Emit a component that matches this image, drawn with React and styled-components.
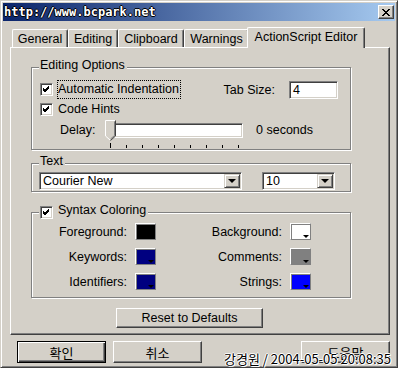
import styled, { createGlobalStyle } from "styled-components";

const GlobalStyle = createGlobalStyle`
  body {
    margin: 0;
    background: #ffffff;
  }
  * {
    box-sizing: border-box;
  }
`;

const Window = styled.div`
  position: relative;
  width: 398px;
  height: 368px;
  display: flex;
  flex-direction: column;
  padding: 2px;
  background: #d4d0c8;
  border: 1px solid;
  border-color: #d4d0c8 #404040 #404040 #d4d0c8;
  box-shadow: inset 1px 1px 0 #fff, inset -1px -1px 0 #808080;
  font-family: "Liberation Sans", "Noto Sans CJK KR", sans-serif;
  font-size: 12.5px;
  color: #000;
`;

const TitleBar = styled.div`
  height: 18px;
  display: flex;
  align-items: center;
  justify-content: space-between;
  padding: 0 1px 0 1px;
  background: linear-gradient(to right, #0a246a, #a6caf0);
`;

const TitleText = styled.span`
  font-family: "DejaVu Sans Mono", monospace;
  font-weight: bold;
  font-size: 12px;
  color: #fff;
  text-shadow: 1px 0 0 #000, -1px 0 0 #000, 0 1px 0 #000, 0 -1px 0 #000;
`;

const CloseButton = styled.div`
  width: 16px;
  height: 14px;
  display: flex;
  align-items: center;
  justify-content: center;
  background: #d4d0c8;
  border: 1px solid;
  border-color: #fff #404040 #404040 #fff;
  box-shadow: inset -1px -1px 0 #808080;
`;

const TabStrip = styled.div`
  position: relative;
  z-index: 1;
  height: 20px;
  margin-top: 6px;
  padding-left: 9px;
  display: flex;
  align-items: flex-end;
`;

const Tab = styled.div`
  width: ${({ $w }) => $w}px;
  height: ${({ $active }) => ($active ? 21 : 18)}px;
  margin: ${({ $active }) => ($active ? "0 -2px -1px -2px" : "0")};
  padding-top: 2px;
  line-height: 14px;
  text-align: center;
  white-space: nowrap;
  background: #d4d0c8;
  border-top: 1px solid #fff;
  border-left: 1px solid #fff;
  border-right: 1px solid #404040;
  border-radius: 2px 2px 0 0;
  box-shadow: inset -1px 0 0 #808080;
  position: relative;
  z-index: ${({ $active }) => ($active ? 2 : 0)};
`;

const Panel = styled.div`
  width: 380px;
  height: 288px;
  margin-left: 7px;
  padding: 19px 0 0 20px;
  display: flex;
  flex-direction: column;
  align-items: flex-start;
  border: 1px solid;
  border-color: #fff #404040 #404040 #fff;
  box-shadow: inset -1px -1px 0 #808080;
`;

const Group = styled.div`
  position: relative;
  width: 320px;
  height: ${({ $h }) => $h}px;
  margin-top: ${({ $mt }) => $mt || 0}px;
  border: 1px solid #808080;
  box-shadow: inset 1px 1px 0 #fff, 1px 1px 0 #fff;
  padding: ${({ $pad }) => $pad};
`;

const Legend = styled.div`
  position: absolute;
  top: ${({ $top }) => $top}px;
  left: 7px;
  padding: 0 2px 0 1px;
  line-height: 14px;
  background: #d4d0c8;
  display: flex;
  align-items: center;
  gap: 5px;
`;

const LegendText = styled.span`
  position: relative;
  top: ${({ $shift }) => $shift || 0}px;
`;

const Row = styled.div`
  display: flex;
  align-items: center;
  height: ${({ $h }) => $h}px;
  margin-top: ${({ $mt }) => $mt || 0}px;
  justify-content: ${({ $between }) => ($between ? "space-between" : "flex-start")};
`;

const CheckLabel = styled.div`
  display: flex;
  align-items: center;
  gap: 4px;
`;

const Box = styled.div`
  width: 13px;
  height: 13px;
  display: flex;
  align-items: center;
  justify-content: center;
  background: #fff;
  border: 1px solid;
  border-color: #808080 #fff #fff #808080;
  box-shadow: inset 1px 1px 0 #404040, inset -1px -1px 0 #d4d0c8;
`;

const FocusText = styled.span`
  line-height: 17px;
  padding: 0 1px 0 0;
  border: 1px dotted ${({ $focused }) => ($focused ? "#000" : "transparent")};
`;

const Sunken = styled.div`
  border: 1px solid;
  border-color: #808080 #fff #fff #808080;
  box-shadow: inset 1px 1px 0 #404040, inset -1px -1px 0 #d4d0c8;
  background: #fff;
`;

const TabSize = styled.div`
  display: flex;
  align-items: center;
  gap: 14px;
`;

const TextInput = styled(Sunken)`
  width: 49px;
  height: 18px;
  padding: 0 0 0 3px;
  line-height: 16px;
`;

const DelayLabel = styled.span`
  width: 45px;
  margin-left: 20px;
`;

const Slider = styled.div`
  position: relative;
  width: 138px;
  height: 20px;
  display: flex;
  align-items: center;
`;

const Channel = styled(Sunken)`
  width: 131px;
  height: 15px;
  margin-left: 8px;
`;

const Thumb = styled.svg`
  position: absolute;
  left: 0;
  top: 0;
`;

const Seconds = styled.span`
  margin-left: 13px;
`;

const Ticks = styled.div`
  display: flex;
  align-items: flex-end;
  gap: 15px;
  height: 5px;
  margin-top: 3px;
  padding-left: 70px;
`;

const Tick = styled.div`
  width: 1px;
  height: ${({ $tall }) => ($tall ? 5 : 3)}px;
  background: #000;
`;

const Combo = styled(Sunken)`
  width: ${({ $w }) => $w}px;
  height: 18px;
  margin-left: ${({ $ml }) => $ml || 0}px;
  display: flex;
  align-items: center;
  padding: 1px 1px 1px 3px;
`;

const ComboText = styled.span`
  flex: 1;
  line-height: 14px;
`;

const DropButton = styled.div`
  width: 16px;
  height: 14px;
  display: flex;
  align-items: center;
  justify-content: center;
  background: #d4d0c8;
  border: 1px solid;
  border-color: #d4d0c8 #404040 #404040 #d4d0c8;
  box-shadow: inset 1px 1px 0 #fff, inset -1px -1px 0 #808080;
`;

const Arrow = styled.div`
  width: 0;
  height: 0;
  border-left: 4px solid transparent;
  border-right: 4px solid transparent;
  border-top: 4px solid #000;
`;

const ColorGrid = styled.div`
  display: grid;
  grid-template-columns: 116px 155px;
  row-gap: 8px;
`;

const ColorRow = styled.div`
  height: 17px;
  display: flex;
  align-items: center;
  justify-content: flex-end;
  gap: 8px;
`;

const Swatch = styled.div`
  position: relative;
  width: 21px;
  height: 17px;
  border: 1px solid;
  border-color: #fff #808080 #808080 #fff;
  box-shadow: inset 1px 1px 0 #808080;
  background: ${({ $color }) => $color};
`;

const SwatchArrow = styled.div`
  position: absolute;
  right: 0;
  bottom: 0;
  width: 8px;
  height: 5px;
  display: flex;
  justify-content: center;
  padding-top: 1px;
  background: ${({ $color }) => $color};
  &::after {
    content: "";
    border-left: 3px solid transparent;
    border-right: 3px solid transparent;
    border-top: 3px solid #000;
  }
`;

const Button = styled.div`
  width: ${({ $w }) => $w}px;
  height: ${({ $h }) => $h}px;
  display: flex;
  align-items: center;
  justify-content: center;
  background: #d4d0c8;
  border: 1px solid;
  border-color: ${({ $default }) =>
    $default ? "#000" : "#fff #404040 #404040 #fff"};
  box-shadow: ${({ $default }) =>
    $default
      ? "inset 1px 1px 0 #fff, inset -1px -1px 0 #404040, inset -2px -2px 0 #808080"
      : "inset -1px -1px 0 #808080"};
`;

const ResetButton = styled(Button)`
  margin: 10px 0 0 85px;
`;

const ButtonRow = styled.div`
  display: flex;
  align-items: center;
  gap: 7px;
  margin-top: 6px;
  padding: 0 5px 0 14px;
  font-size: 13px;
  & > :last-child {
    margin-left: auto;
  }
`;

const Stamp = styled.div`
  position: absolute;
  left: 223px;
  top: 350px;
  font-family: "Noto Sans CJK KR", sans-serif;
  font-size: 13px;
  line-height: 16px;
  color: #000;
  text-shadow: 1px 1px 0 #fff, -1px 0 0 #fff, 0 -1px 0 #fff, 1px 0 0 #fff;
  white-space: nowrap;
`;

const Check = () => (
  <svg width="7" height="7" viewBox="0 0 7 7">
    <path d="M0 2 L2 4 L6 0 M0 3 L2 5 L6 1 M0 4 L2 6 L6 2" stroke="#000" strokeWidth="1" fill="none" shapeRendering="crispEdges" />
  </svg>
);

const colors = [
  ["Foreground:", "#000000", "Background:", "#ffffff"],
  ["Keywords:", "#000080", "Comments:", "#808080"],
  ["Identifiers:", "#000080", "Strings:", "#0000ff"],
];

const tabs = [
  ["General", 56],
  ["Editing", 50],
  ["Clipboard", 66],
  ["Warnings", 65],
];

const App = () => {
  return (
    <>
      <GlobalStyle />
      <Window>
        <TitleBar>
          <TitleText>http://www.bcpark.net</TitleText>
          <CloseButton>
            <svg width="8" height="7" viewBox="0 0 8 7">
              <path d="M0 0 L7 7 M1 0 L8 7 M7 0 L0 7 M8 0 L1 7" stroke="#000" strokeWidth="1" />
            </svg>
          </CloseButton>
        </TitleBar>

        <TabStrip>
          {tabs.map(([name, w]) => (
            <Tab key={name} $w={w}>
              {name}
            </Tab>
          ))}
          <Tab $w={118} $active>
            ActionScript Editor
          </Tab>
        </TabStrip>

        <Panel>
          <Group $h={83} $pad="12px 12px 0 8px">
            <Legend $top={-10}>Editing Options</Legend>
            <Row $h={19} $between>
              <CheckLabel>
                <Box>
                  <Check />
                </Box>
                <FocusText $focused>Automatic Indentation</FocusText>
              </CheckLabel>
              <TabSize>
                <span>Tab Size:</span>
                <TextInput>4</TextInput>
              </TabSize>
            </Row>
            <Row $h={16} $mt={2}>
              <CheckLabel>
                <Box>
                  <Check />
                </Box>
                <FocusText>Code Hints</FocusText>
              </CheckLabel>
            </Row>
            <Row $h={20} $mt={3}>
              <DelayLabel>Delay:</DelayLabel>
              <Slider>
                <Channel />
                <Thumb width="11" height="21" viewBox="0 0 11 21">
                  <path d="M0.5 0.5 H10.5 V16 L5.5 20.5 L0.5 16 Z" fill="#d4d0c8" />
                  <path d="M0.5 16 V0.5 H10" stroke="#fff" fill="none" />
                  <path d="M10.5 0.5 V16 L5.5 20.5" stroke="#404040" fill="none" />
                  <path d="M9.5 1.5 V15.5 L5.5 19" stroke="#808080" fill="none" />
                  <path d="M0.5 16 L5 20" stroke="#fff" fill="none" />
                </Thumb>
              </Slider>
              <Seconds>0 seconds</Seconds>
            </Row>
            <Ticks>
              {Array.from({ length: 9 }).map((_, i) => (
                <Tick key={i} $tall={i === 0} />
              ))}
            </Ticks>
          </Group>

          <Group $h={29} $mt={13} $pad="8px 0 0 7px">
            <Legend $top={-10}>Text</Legend>
            <Row $h={18}>
              <Combo $w={203}>
                <ComboText>Courier New</ComboText>
                <DropButton>
                  <Arrow />
                </DropButton>
              </Combo>
              <Combo $w={73} $ml={20}>
                <ComboText>10</ComboText>
                <DropButton>
                  <Arrow />
                </DropButton>
              </Combo>
            </Row>
          </Group>

          <Group $h={86} $mt={20} $pad="10px 0 0 8px">
            <Legend $top={-8}>
              <Box>
                <Check />
              </Box>
              <LegendText $shift={-2}>Syntax Coloring</LegendText>
            </Legend>
            <ColorGrid>
              {colors.map(([l1, c1, l2, c2]) => [
                <ColorRow key={l1}>
                  <span>{l1}</span>
                  <Swatch $color={c1}>
                    <SwatchArrow $color={c1} />
                  </Swatch>
                </ColorRow>,
                <ColorRow key={l2}>
                  <span>{l2}</span>
                  <Swatch $color={c2}>
                    <SwatchArrow $color={c2} />
                  </Swatch>
                </ColorRow>,
              ])}
            </ColorGrid>
          </Group>

          <ResetButton $w={147} $h={20}>
            Reset to Defaults
          </ResetButton>
        </Panel>

        <ButtonRow>
          <Button $w={89} $h={22} $default>
            확인
          </Button>
          <Button $w={89} $h={22}>
            취소
          </Button>
          <Button $w={89} $h={22}>
            도움말
          </Button>
        </ButtonRow>

        <Stamp>강경원 / 2004-05-05 20:08:35</Stamp>
      </Window>
    </>
  );
};

export default App;
